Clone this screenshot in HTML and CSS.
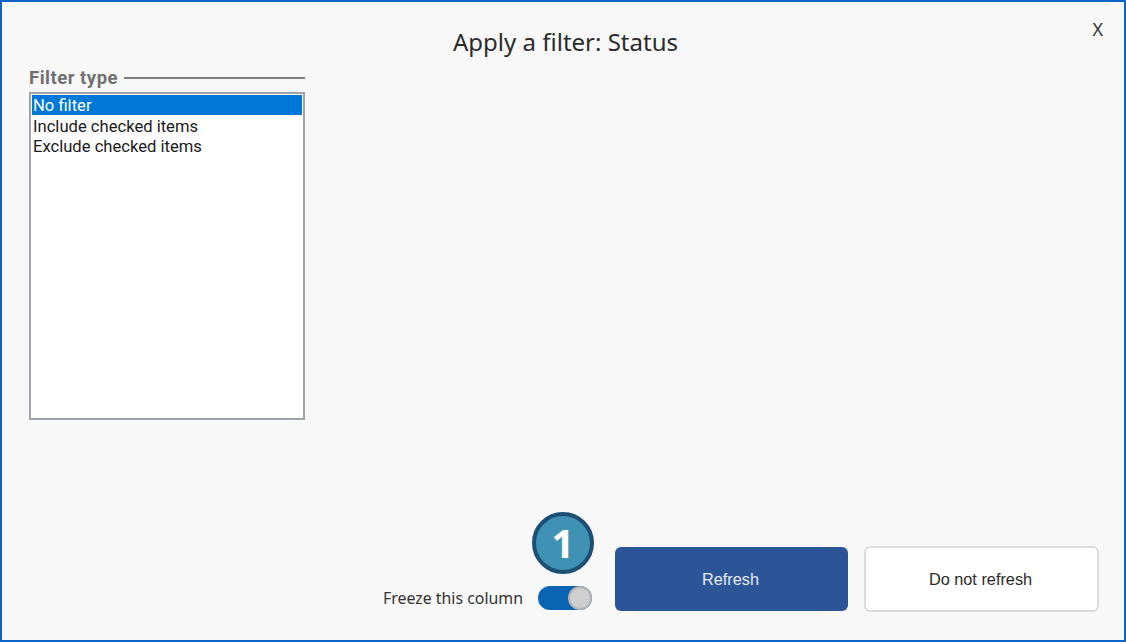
FILE: index.html
```html
<!DOCTYPE html>
<html lang="en">
<head>
<meta charset="utf-8">
<title>Apply a filter: Status</title>
<link rel="stylesheet" href="styles.css">
</head>
<body>
<div class="dialog">
  <header class="head">
    <h1 class="title">Apply a filter: Status</h1>
    <button class="close" type="button">X</button>
  </header>
  <main class="main">
    <section class="group">
      <div class="group-label"><span>Filter type</span><i class="group-line"></i></div>
      <ul class="list">
        <li class="item selected">No filter</li>
        <li class="item">Include checked items</li>
        <li class="item">Exclude checked items</li>
      </ul>
    </section>
  </main>
  <footer class="foot">
    <span class="freeze-label">Freeze this column</span>
    <div class="toggle-wrap">
      <span class="badge">1</span>
      <span class="toggle"><span class="knob"></span></span>
    </div>
    <button class="btn primary" type="button">Refresh</button>
    <button class="btn secondary" type="button">Do not refresh</button>
  </footer>
</div>
</body>
</html>
```
FILE: styles.css
```css
* { box-sizing: border-box; }
html, body { margin: 0; height: 100%; }
body { font-family: "Noto Sans", "Liberation Sans", sans-serif; background: #f8f8f8; overflow: hidden; }
.dialog {
  width: 1126px; height: 642px;
  border: 2px solid #0f62c6;
  background: #f8f8f8;
  display: flex; flex-direction: column;
  padding: 0 25px 28px 27px;
}
.head { position: relative; height: 66px; display: flex; justify-content: center; padding-left: 3px; }
.title { margin: 21px 0 0; font-size: 24px; line-height: 38px; font-weight: 400; color: #2b2b2b; }
.close {
  position: absolute; right: -4px; top: 15px;
  border: 0; background: none; padding: 0;
  font: 400 18px/24px "Noto Sans", sans-serif; color: #333;
}
.main { flex: 1; }
.group { width: 276px; }
.group-label { display: flex; align-items: center; gap: 6px; height: 20px; font: 700 18.5px/20px "Roboto", sans-serif; color: #707070; letter-spacing: 0.5px; }
.group-line { flex: 1; height: 2px; background: #808080; }
.list {
  list-style: none; margin: 4px 0 0; padding: 1px;
  height: 328px;
  border: 2px solid #a0a3aa;
  background: #fff;
}
.item { height: 20px; padding-left: 1px; font: 400 16.6px/22px "Roboto", sans-serif; color: #1a1a1a; white-space: nowrap; }
.item.selected { background: #0078d7; color: #fff; margin-bottom: 1px; }
.foot { display: flex; align-items: flex-end; justify-content: flex-end; }
.freeze-label { font-size: 15.9px; line-height: 24px; color: #333; margin-bottom: 2px; margin-right: 15px; }
.toggle-wrap { position: relative; margin-right: 23px; margin-bottom: 2px; }
.toggle { display: block; width: 54px; height: 24px; border-radius: 12px; background: #0a64b4; position: relative; }
.knob { position: absolute; right: 0; top: 0; width: 24px; height: 24px; border-radius: 50%; background: #cfcfcf; border: 2px solid #b5b5b5; }
.badge {
  position: absolute; left: -6px; top: -74px;
  width: 62px; height: 62px; border-radius: 50%;
  background: #4092b4; border: 4px solid #1d4e74;
  color: #fff; font: 700 40px/54px "Open Sans", sans-serif; text-align: center;
}
.btn { height: 64px; border-radius: 6px; padding: 0 2px 0 0; font-family: "Liberation Sans", sans-serif; font-size: 16.3px; }
.primary { width: 233px; background: #2b5597; border: 0; color: #e6ecf5; margin-right: 16px; margin-bottom: 1px; }
.secondary { width: 235px; height: 66px; background: #fff; border: 2px solid #dcdcdc; color: #2a2a2a; }
```
